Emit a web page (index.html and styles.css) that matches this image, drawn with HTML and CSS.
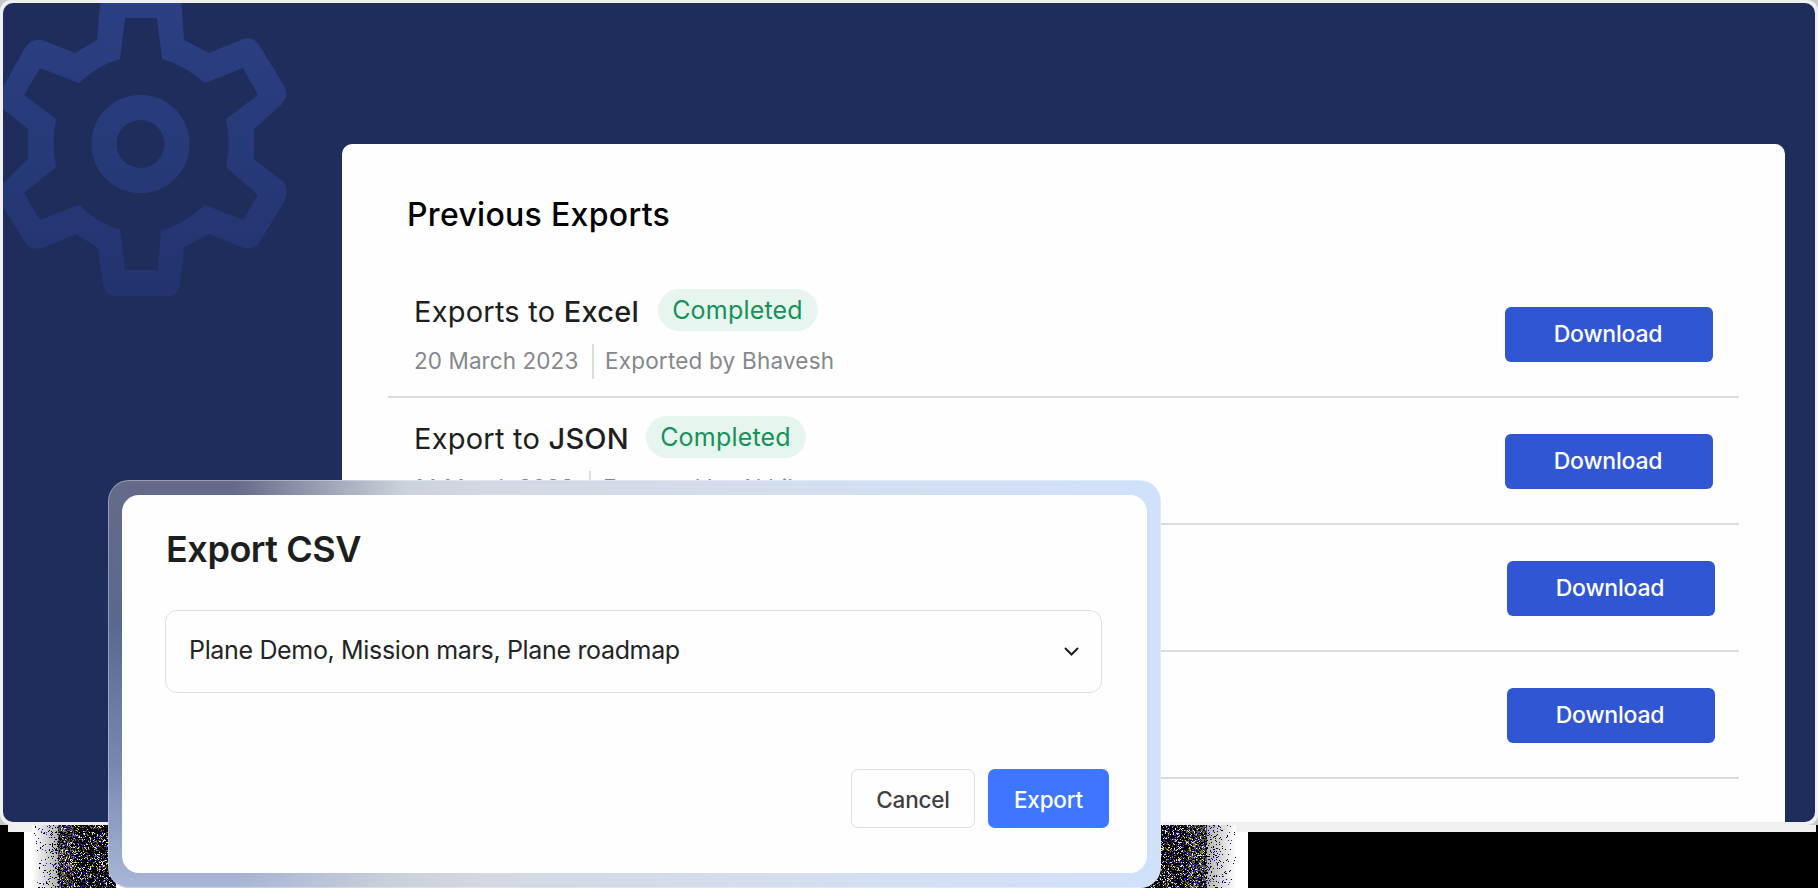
FILE: index.html
```html
<!DOCTYPE html>
<html lang="en">
<head>
<meta charset="utf-8">
<title>Exports</title>
<link rel="stylesheet" href="styles.css">
</head>
<body>
<main class="page">
  <div class="frame">
    <div class="stage">
      <svg class="gear" width="290" height="300" viewBox="0 0 290 300" fill="none">
        <defs><linearGradient id="gearFill" x1="0" y1="0" x2="0" y2="300" gradientUnits="userSpaceOnUse"><stop offset="0" stop-color="#2b4083"/><stop offset="1" stop-color="#22336f"/></linearGradient></defs>
        <g stroke="url(#gearFill)" stroke-linejoin="round">
          <circle cx="137.500" cy="141" r="36.500" stroke-width="25"/>
        </g>
        <path fill="url(#gearFill)" fill-rule="evenodd" d="M98 -10Q99 -16 111 -16H167Q177 -16 178 -6L181 37L206 50L240 36Q250 33 256 42L280 81Q287 92 279 101L251 126V156L279 178Q287 185 281 199L256 240Q251 247 241 245L206 231L181 244L177 281Q175 293 165 293H113Q102 293 100 281L95 245L73 231L40 245Q29 248 22 239L-2 200Q-8 190 1 180L25 156V126L0 106Q-8 98 0 84L22 45Q28 35 39 37L72 50L94 37ZM122 15L117 56Q95 62 76 80L37 65L21 92L53 116Q48 141 53 164L21 190L37 217L76 202Q94 220 117 227L122 267H155L158 228Q181 221 202 202L240 217L255 192L223 164Q228 141 223 116L255 92L240 65L202 80Q181 62 159 56L154 15Z"/>
      </svg>
      <section class="panel">
        <h1 class="panel-title">Previous Exports</h1>
        <ul class="exports">
          <li class="row">
            <div class="info">
              <div class="headline"><span class="name">Exports to <b>Excel</b></span><span class="pill">Completed</span></div>
              <div class="meta"><span class="date">20 March 2023</span><span class="author">Exported by Bhavesh</span></div>
            </div>
            <button class="download">Download</button>
          </li>
          <li class="row">
            <div class="info">
              <div class="headline json"><span class="name">Export to <b>JSON</b></span><span class="pill">Completed</span></div>
              <div class="meta second"><span class="date">14 March 2023</span><span class="author">Exported by Akhil</span></div>
            </div>
            <button class="download">Download</button>
          </li>
          <li class="row shifted"><button class="download">Download</button></li>
          <li class="row shifted"><button class="download">Download</button></li>
        </ul>
      </section>
    </div>
  </div>
  <div class="ground">
    <canvas class="grain left" width="84" height="63"></canvas>
    <canvas class="grain right" width="98" height="63"></canvas>
  </div>
  <section class="modal">
    <div class="dialog">
      <h2 class="dialog-title">Export CSV</h2>
      <div class="select"><span class="value">Plane Demo, Mission mars, Plane roadmap</span>
        <svg width="16" height="10" viewBox="0 0 16 10" fill="none" stroke="#1c1e20" stroke-width="2" stroke-linecap="round"><path d="M2.500 1.500L8.500 7.500L14.500 1.500"/></svg>
      </div>
      <div class="actions"><button class="cancel">Cancel</button><button class="export">Export</button></div>
    </div>
  </section>
</main>
<script src="grain.js"></script>
</body>
</html>
```
FILE: styles.css
```css
* { box-sizing: border-box; }
body { margin: 0; background: #000; font-family: Inter, "Liberation Sans", sans-serif; overflow: hidden; }
h1, h2, ul { margin: 0; padding: 0; }
button { font-family: inherit; padding: 0; border: 0; }
.page { position: relative; width: 1818px; height: 888px; overflow: hidden; background: #c6c8c9; }
.frame { height: 825px; padding: 3px; background: #f0f0f2; border-radius: 11px; }
.stage { position: relative; height: 819px; background: #1f2d5c; border-radius: 10px; overflow: hidden; padding: 141px 30px 0 339px; }
.gear { position: absolute; left: 0; top: 0; }
.panel { position: relative; height: 678px; background: #fefefe; border-radius: 10px 10px 0 0; padding: 51px 46px 0; }
.panel-title { font-size: 32px; line-height: 40px; font-weight: 500; letter-spacing: .3px; padding-left: 19px; color: #000; white-space: nowrap; }
.exports { list-style: none; padding-top: 36px; }
.row { display: flex; justify-content: space-between; height: 127px; padding: 18px 26px 0; border-bottom: 2px solid #dadbdd; }
.row.shifted { justify-content: flex-end; padding-right: 24px; }
.headline { display: flex; align-items: center; height: 42px; gap: 19px; }
.headline.json { gap: 17px; }
.name { font-size: 29px; line-height: 42px; color: #1c1e20; padding-top: 4px; letter-spacing: .23px; white-space: nowrap; }
.name b { font-weight: 500; }
.pill { width: 160px; height: 42px; padding-right: 1px; border-radius: 21px; background: #e6f6ee; color: #16915a; font-size: 25px; line-height: 42px; text-align: center; letter-spacing: .2px; }
.meta { display: flex; align-items: center; height: 35px; margin-top: 13px; color: #84878b; font-size: 22.500px; line-height: 33px; white-space: nowrap; letter-spacing: .2px; }
.date { width: 178px; height: 35px; letter-spacing: .08px; }
.second .date { width: 175px; }
.author { height: 35px; border-left: 2px solid #dddee0; padding-left: 11px; }
.second .author { padding-left: 12px; }
.download { width: 208px; height: 55px; margin-top: 18px; padding: 0 2px 2px 0; border-radius: 6px; background: #3056d3; color: #fff; font-size: 23px; font-weight: 500; letter-spacing: -.2px; }
.ground { position: relative; height: 63px; background: linear-gradient(#f0f0f1, #f0f0f1) 8px 0 / 1808px 7px no-repeat, linear-gradient(#fff, #fff) 24px 0 / 1224px 63px no-repeat, #000; }
.grain { position: absolute; top: 0; }
.grain.left { left: 32px; }
.grain.right { left: 1138px; }
.modal { position: absolute; left: 108px; top: 480px; width: 1053px; height: 408px; padding: 14px 13px; border-radius: 21px; border: 1px solid #ffffff55; background: linear-gradient(90deg, #d1e1fb00 0%, #d1e1fb00 12%, #ccd2db 28%, #d3d8e3 36%, #d3deef 65%, #d0e1fb 100%) border-box, linear-gradient(#656b89 0%, #5a688f 35%, #7788b0 70%, #a9b8d8 100%) border-box; }
.dialog { height: 378px; background: #fefefe; border-radius: 17px; padding: 32px 38px 0 43px; }
.dialog-title { padding-left: 1px; font-size: 36px; line-height: 44px; font-weight: 600; color: #1c1e20; white-space: nowrap; letter-spacing: -.45px; }
.select { display: flex; align-items: center; justify-content: space-between; width: 937px; height: 83px; margin-top: 39px; padding: 0 22px 4px 23px; border: 1px solid #dddee0; border-radius: 12px; color: #222426; font-size: 25px; letter-spacing: -.34px; white-space: nowrap; }
.select svg { position: relative; top: 2px; }
.actions { display: flex; justify-content: flex-end; gap: 13px; padding-top: 76px; }
.actions button { height: 59px; padding-top: 2px; border-radius: 7px; font-size: 22.500px; font-weight: 500; letter-spacing: -.2px; }
.actions .cancel { width: 124px; background: #fefefe; border: 1px solid #dddee0; color: #3e4042; }
.actions .export { width: 121px; background: #3f76ff; color: #fff; }
```
FILE: grain.js
```js
// Speckled shadow: dense and dark beside the dialog, thinning out towards the edge.
let seed = 7;
const rnd = () => (seed = (seed * 16807) % 2147483647) / 2147483647;
const bright = ['#ffffff', '#2020ff', '#e8e840', '#808080', '#d8d8ff', '#606030', '#30308a', '#b05030'];
function speckle(selector, inward) {
  const canvas = document.querySelector(selector);
  const ctx = canvas.getContext('2d');
  for (let y = 0; y < canvas.height; y++) {
    for (let x = 0; x < canvas.width; x++) {
      const t = inward(x, canvas.width);
      const r = rnd();
      if (t < .3) {
        const g = 255 - Math.round(t * 250);
        ctx.fillStyle = r < t * .6 ? (rnd() < .8 ? '#000' : '#2020ff') : `rgb(${g},${g},${g})`;
      } else if (t < .5) {
        ctx.fillStyle = r < .45 ? '#000' : r < .68 ? '#606064' : bright[Math.floor(rnd() * 8)];
      } else {
        ctx.fillStyle = r < .66 ? '#000' : bright[Math.floor(rnd() * 8)];
      }
      ctx.fillRect(x, y, 1, 1);
    }
  }
}
speckle('.grain.left', (x, w) => x / w);
speckle('.grain.right', (x, w) => 1 - x / w);
```
